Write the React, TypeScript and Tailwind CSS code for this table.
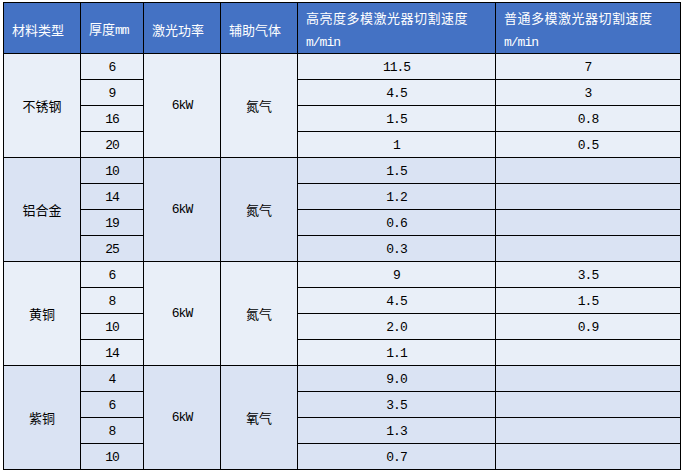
import React from "react";

type Group = {
  name: string;
  gas: string;
  bg: string;
  rows: { t: string; hi: string; std: string }[];
};

const groups: Group[] = [
  {
    name: "不锈钢",
    gas: "氮气",
    bg: "bg-[#e9eff8]",
    rows: [
      { t: "6", hi: "11.5", std: "7" },
      { t: "9", hi: "4.5", std: "3" },
      { t: "16", hi: "1.5", std: "0.8" },
      { t: "20", hi: "1", std: "0.5" },
    ],
  },
  {
    name: "铝合金",
    gas: "氮气",
    bg: "bg-[#dae3f3]",
    rows: [
      { t: "10", hi: "1.5", std: "" },
      { t: "14", hi: "1.2", std: "" },
      { t: "19", hi: "0.6", std: "" },
      { t: "25", hi: "0.3", std: "" },
    ],
  },
  {
    name: "黄铜",
    gas: "氮气",
    bg: "bg-[#e9eff8]",
    rows: [
      { t: "6", hi: "9", std: "3.5" },
      { t: "8", hi: "4.5", std: "1.5" },
      { t: "10", hi: "2.0", std: "0.9" },
      { t: "14", hi: "1.1", std: "" },
    ],
  },
  {
    name: "紫铜",
    gas: "氧气",
    bg: "bg-[#dae3f3]",
    rows: [
      { t: "4", hi: "9.0", std: "" },
      { t: "6", hi: "3.5", std: "" },
      { t: "8", hi: "1.3", std: "" },
      { t: "10", hi: "0.7", std: "" },
    ],
  },
];

const cjk = "font-['Noto_Sans_CJK_SC',sans-serif] text-[13px]";
const mono = "font-['Liberation_Mono','Noto_Sans_CJK_SC',monospace] text-[13px] tracking-[-1px]";
const cell = "border border-black p-0";

export default function App() {
  return (
    <div className="bg-white w-[683px] h-[473px] pt-[2px] pl-[3px]">
      <table className="table-fixed border-collapse w-[677px] text-black">
        <colgroup>
          <col className="w-[77px]" />
          <col className="w-[63px]" />
          <col className="w-[77px]" />
          <col className="w-[77px]" />
          <col className="w-[198px]" />
          <col className="w-[185px]" />
        </colgroup>
        <thead>
          <tr className="h-[51px] bg-[#4472c4] text-white">
            <th className={`${cell} ${cjk} align-middle font-normal text-left pl-[8px] pt-[4px] leading-[20px]`}>材料类型</th>
            <th className={`${cell} ${cjk} align-middle font-normal text-left pl-[8px] pt-[4px] leading-[20px]`}>
              厚度<span className={mono}>mm</span>
            </th>
            <th className={`${cell} ${cjk} align-middle font-normal text-left pl-[8px] pt-[4px] leading-[20px]`}>激光功率</th>
            <th className={`${cell} ${cjk} align-middle font-normal text-left pl-[8px] pt-[4px] leading-[20px]`}>辅助气体</th>
            <th className={`${cell} align-top font-normal text-left pl-[8px]`}>
              <div className={`${cjk} tracking-[0.5px] leading-[30px]`}>高亮度多模激光器切割速度</div>
              <div className={`${mono} leading-[20px]`}>m/min</div>
            </th>
            <th className={`${cell} align-top font-normal text-left pl-[8px]`}>
              <div className={`${cjk} tracking-[0.5px] leading-[30px]`}>普通多模激光器切割速度</div>
              <div className={`${mono} leading-[20px]`}>m/min</div>
            </th>
          </tr>
        </thead>
        <tbody>
          {groups.map((g) =>
            g.rows.map((r, i) => (
              <tr key={g.name + i} className={`h-[26px] ${g.bg}`}>
                {i === 0 && (
                  <td rowSpan={4} className={`${cell} ${cjk} align-middle text-center`}>
                    {g.name}
                  </td>
                )}
                <td className={`${cell} ${mono} align-middle text-center pt-[2px] leading-[20px]`}>{r.t}</td>
                {i === 0 && (
                  <td rowSpan={4} className={`${cell} ${mono} align-middle text-center`}>
                    6kW
                  </td>
                )}
                {i === 0 && (
                  <td rowSpan={4} className={`${cell} ${cjk} align-middle text-center`}>
                    {g.gas}
                  </td>
                )}
                <td className={`${cell} ${mono} align-middle text-center pt-[2px] leading-[20px]`}>{r.hi}</td>
                <td className={`${cell} ${mono} align-middle text-center pt-[2px] leading-[20px]`}>{r.std}</td>
              </tr>
            ))
          )}
        </tbody>
      </table>
    </div>
  );
}
